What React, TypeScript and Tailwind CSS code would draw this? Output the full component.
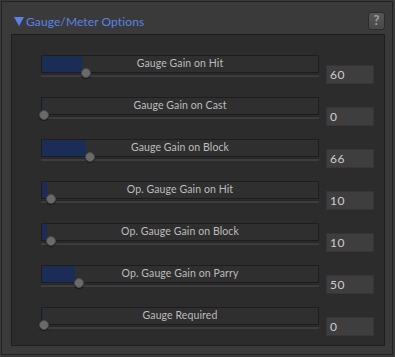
import React from 'react';

interface GaugeRow {
    label: string;
    value: number;
}

const rows: GaugeRow[] = [
    { label: 'Gauge Gain on Hit', value: 60 },
    { label: 'Gauge Gain on Cast', value: 0 },
    { label: 'Gauge Gain on Block', value: 66 },
    { label: 'Op. Gauge Gain on Hit', value: 10 },
    { label: 'Op. Gauge Gain on Block', value: 10 },
    { label: 'Op. Gauge Gain on Parry', value: 50 },
    { label: 'Gauge Required', value: 0 },
];

// px of travel per unit of value
const SCALE = 0.7;

const SliderRow: React.FC<GaugeRow> = ({ label, value }) => {
    const knob = value * SCALE;
    return (
        <div className="flex h-[42px] items-start">
            <div className="relative w-[278px] h-[24px]">
                <div className="relative h-[18px] border border-[#1d1d1d] bg-[#2f2f2f] overflow-hidden">
                    <div className="absolute left-0 top-0 bottom-0 bg-[#1b2d57]" style={{ width: Math.max(knob - 2, value > 0 ? 4 : 1) }} />
                    <div className="relative flex h-full items-center justify-center text-[10.5px] tracking-[0.1px] text-[#bdbdbd]">
                        {label}
                    </div>
                </div>
                <div className="h-[3px] mt-[1px] bg-[#3d3d3d] border-t border-[#262626]" />
                <div
                    className="absolute top-[13px] w-[10px] h-[10px] rounded-full bg-[#6a6a6a] border border-[#4a4a4a] shadow-[0_1px_1px_rgba(0,0,0,0.5)]"
                    style={{ left: knob - 2 }}
                />
            </div>
            <div className="ml-[7px] mt-[10px] w-[48px] h-[19px] bg-[#3e3e3e] border border-[#363636] flex items-center pl-[3px] text-[12px] text-[#cfcfcf] tracking-[0.5px]">
                {value}
            </div>
        </div>
    );
};

export default function App() {
    return (
        <div className="w-[395px] h-[357px] bg-[#3a3a3a] p-[1px] pr-[2px] pb-[2px]" style={{ fontFamily: 'Lato, "Liberation Sans", sans-serif' }}>
            <div className="h-[354px] border border-[#222222] bg-[#3a3a3a] pl-[9px] pr-[7px] pt-[9px]">
                <div className="flex items-center justify-between h-[22px]">
                    <div className="flex items-center text-[12px] text-[#5b83e6] tracking-[0.1px]">
                        <svg width="10" height="9" viewBox="0 0 10 9" className="ml-[3px] mr-[2px] mb-[1px]">
                            <polygon points="0,0 10,0 5,9" fill="#5b83e6" />
                        </svg>
                        <span>Gauge/Meter Options</span>
                    </div>
                    <div className="w-[17px] h-[18px] mb-[2px] rounded-[3px] bg-gradient-to-b from-[#575757] to-[#484848] border border-[#2c2c2c] flex items-center justify-center text-[13px] font-bold text-[#a0a0a0]">
                        ?
                    </div>
                </div>
                <div className="h-[312px] border border-[#1e1e1e] bg-[#2c2c2c] mt-[1px] pl-[29px] pt-[20px]">
                    {rows.map((r) => (
                        <SliderRow key={r.label} {...r} />
                    ))}
                </div>
            </div>
        </div>
    );
}
